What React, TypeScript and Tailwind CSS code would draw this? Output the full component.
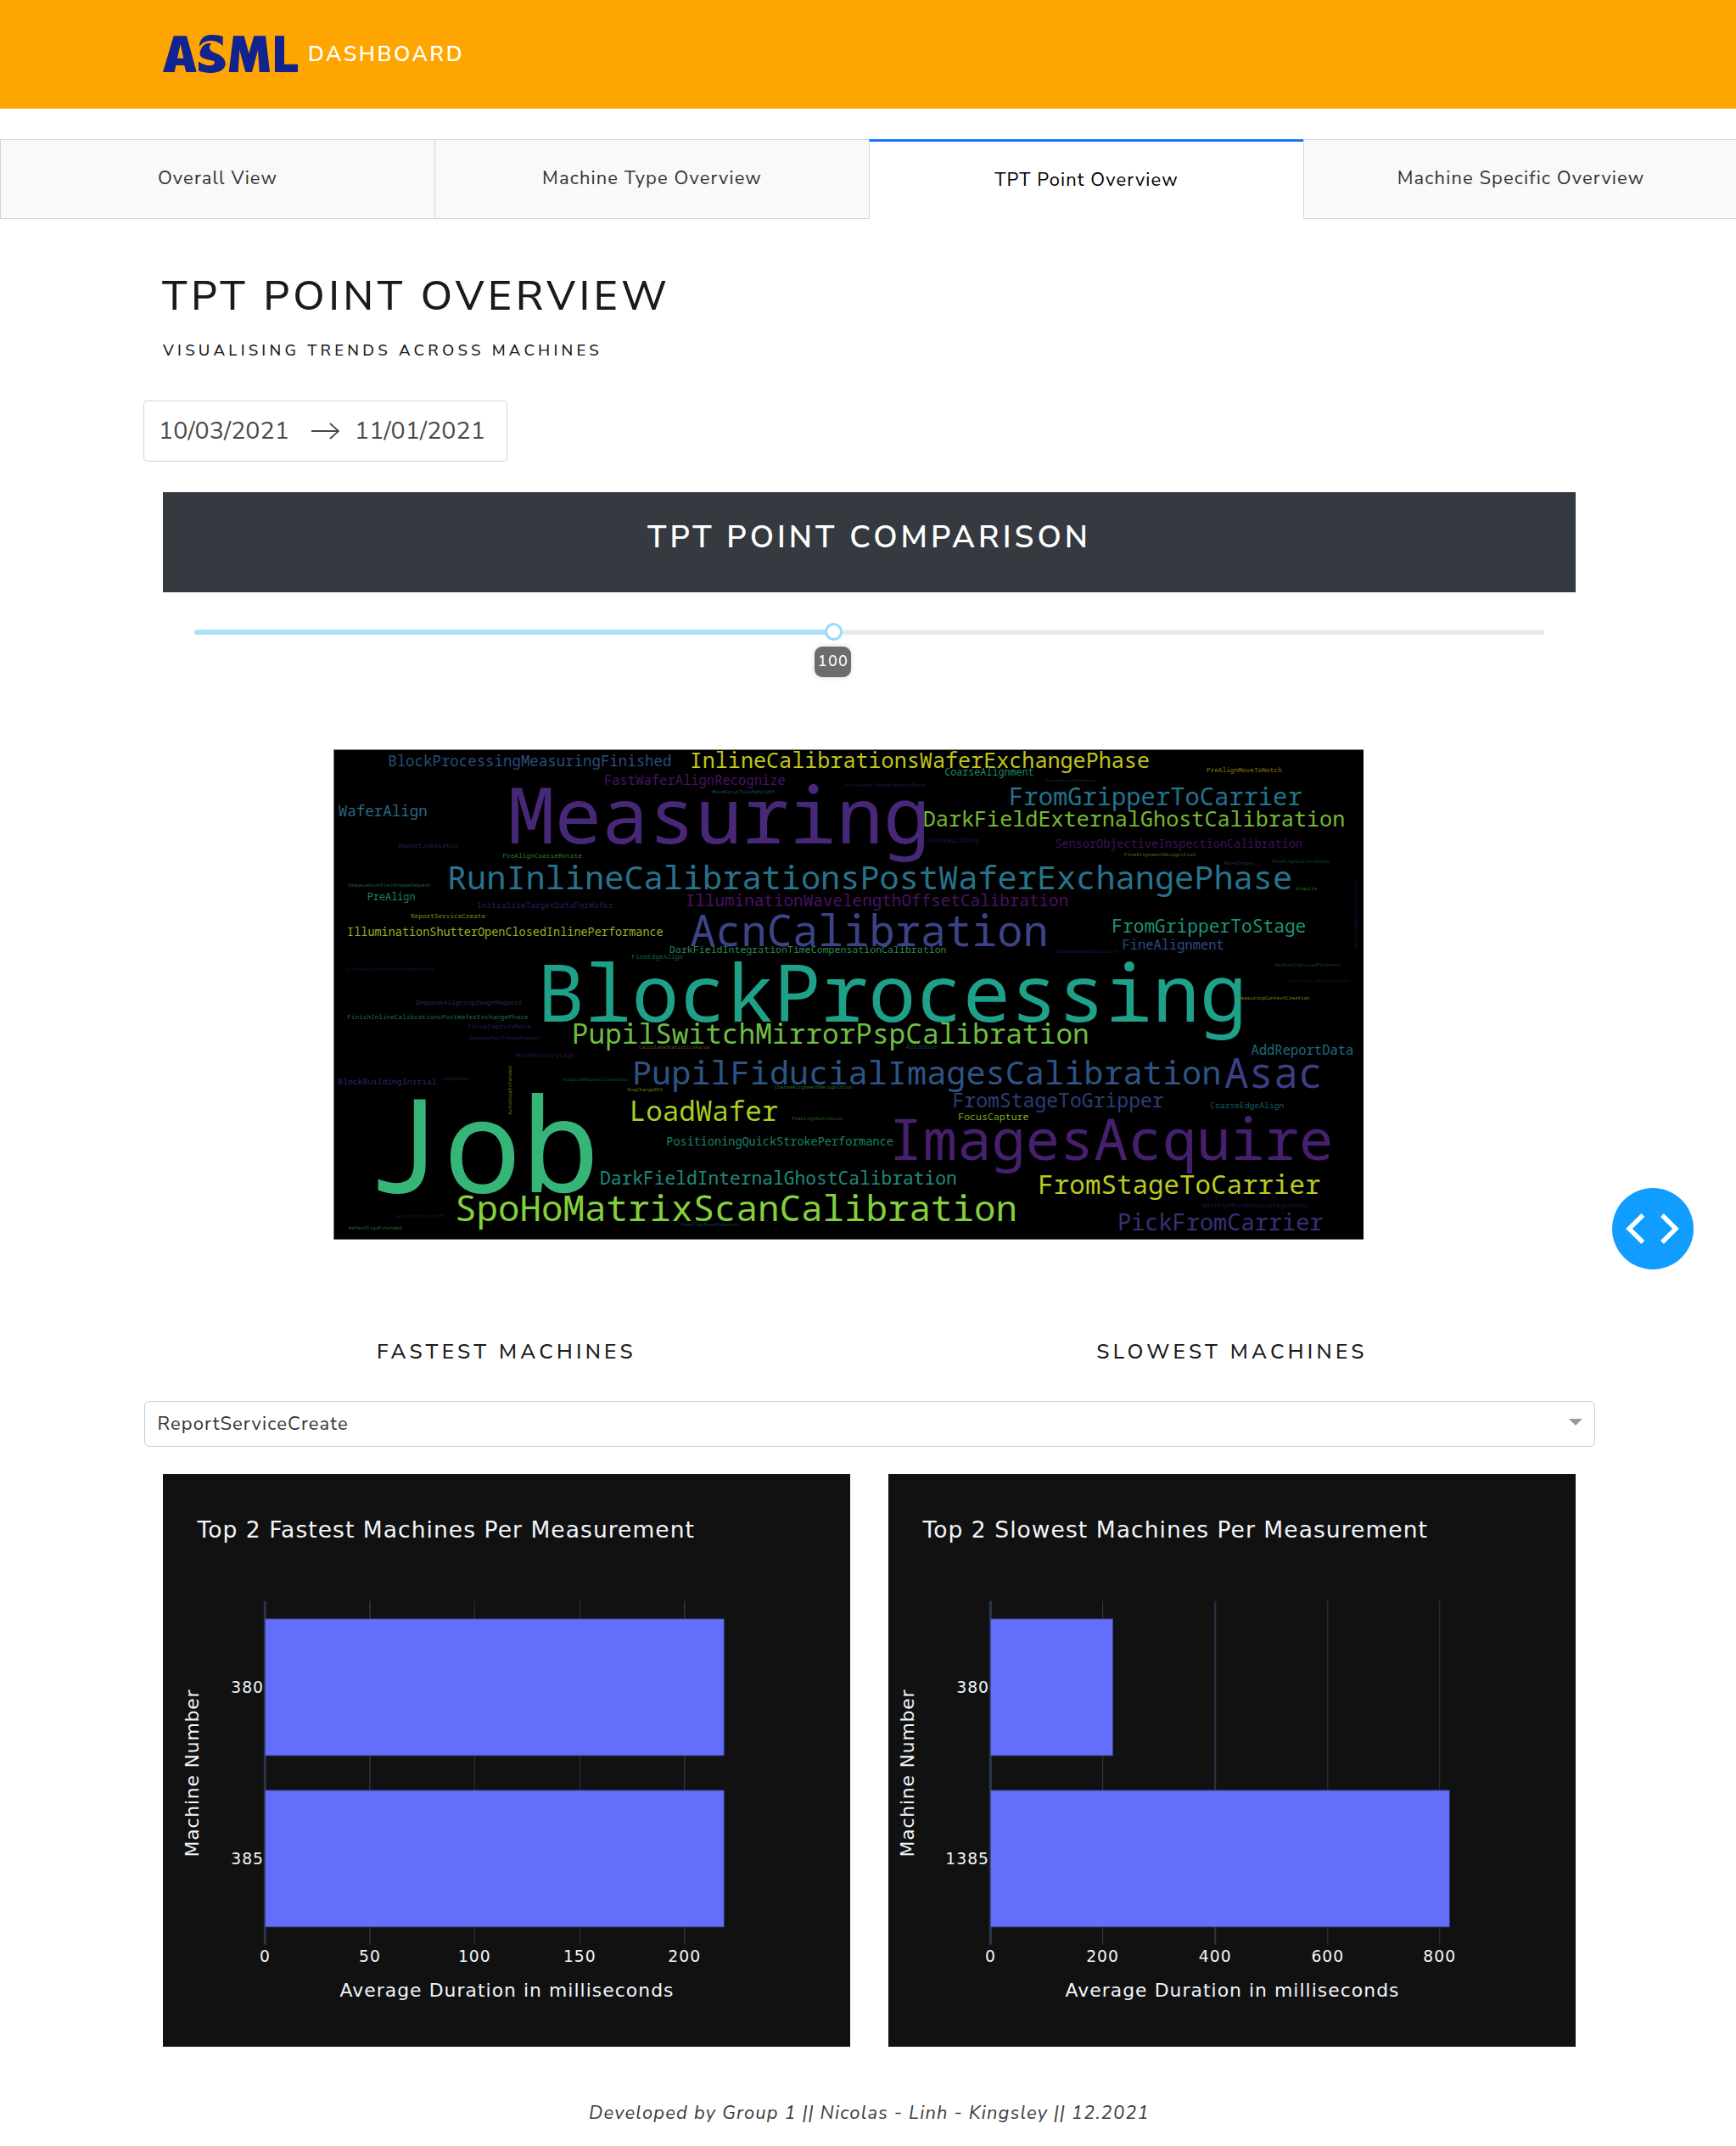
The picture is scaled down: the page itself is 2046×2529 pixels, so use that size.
type Word = [text: string, left: number, right: number, baseline: number, color: string];

const words: Word[] = [
  ["BlockProcessingMeasuringFinished", 458.4, 790.2, 902.5, "#2c4c7d"],
  ["InlineCalibrationsWaferExchangePhase", 814.3, 1352.7, 904.5, "#c2c51b"],
  ["FastWaferAlignRecognize", 713, 924.6, 924.5, "#4a1263"],
  ["MoveFocusToSafeHeigth", 840, 913, 935, "#14524e"],
  ["InitialiseTargetDataForPhase", 994, 1091, 926.5, "#26184a"],
  ["CoarseAlignment", 1114, 1217.5, 914, "#1d8c5c"],
  ["DequeueSpectraWaferRequest", 1233, 1293, 920.5, "#1f2f55"],
  ["PreAlignMoveToNotch", 1422.3, 1510, 909.5, "#877d16"],
  ["Measuring", 604.5, 1087.5, 993.5, "#472878"],
  ["FromGripperToCarrier", 1191, 1532, 949, "#24748f"],
  ["DarkFieldExternalGhostCalibration", 1089.4, 1583, 974, "#76b834"],
  ["WaferAlign", 400, 502, 962, "#266a87"],
  ["BlockBuilding", 1093, 1153.4, 993, "#2a1146"],
  ["SensorObjectiveInspectionCalibration", 1244.4, 1534, 998.7, "#42125c"],
  ["ReportJobStatus", 470, 539, 998.7, "#222452"],
  ["PreAlignCoarseRotate", 592.8, 685.4, 1011.3, "#307a33"],
  ["FineAlignmentRecognition", 1325.4, 1408.5, 1009, "#4a6e1c"],
  ["MoveStages", 1443, 1478, 1018.7, "#1e3050"],
  ["PreAlignCollectData", 1500, 1566, 1017.3, "#12443f"],
  ["RunInlineCalibrationsPostWaferExchangePhase", 529.5, 1519.5, 1047.7, "#27738c"],
  ["DequeueDarkFieldImageRequest", 410.6, 507.4, 1044.7, "#1e6233"],
  ["Acquire", 1528, 1552, 1049.3, "#2c6a24"],
  ["PreAlign", 433.5, 488.5, 1061, "#1b826f"],
  ["InitializeTargetDataForWafer", 562.8, 722, 1070, "#2c1e61"],
  ["IlluminationWavelengthOffsetCalibration", 809, 1257.8, 1067.7, "#491263"],
  ["ReportServiceCreate", 484.5, 571.5, 1082, "#888a16"],
  ["IlluminationShutterOpenClosedInlinePerformance", 410, 780.7, 1103.3, "#93b224"],
  ["AcnCalibration", 816.5, 1231, 1115, "#3d4388"],
  ["DarkFieldIntegrationTimeCompensationCalibration", 789.8, 1114.7, 1123.3, "#298c54"],
  ["FineEdgeAlign", 745, 804.4, 1130.3, "#136058"],
  ["InlineCalibrationsDataHandling", 407.8, 510.6, 1144, "#251044"],
  ["FromGripperToStage", 1311.6, 1537.4, 1098.7, "#1d927b"],
  ["FineAlignment", 1323.4, 1441.3, 1118.7, "#2d4d80"],
  ["QueueCommandsToSource", 1244, 1316, 1123, "#2b0e42"],
  ["WaferAlignLoadPatterns", 1503.4, 1579.7, 1139.3, "#143f50"],
  ["ReportProcessedReportAvailable", 1518, 1591.5, 1156.7, "#1e1a48"],
  ["BlockProcessing", 639, 1461, 1204, "#1fa088"],
  ["MeasuringContextCreation", 1459.5, 1543, 1177.7, "#788516"],
  ["DequeueAligningImageRequest", 490.8, 615, 1184, "#1f2c59"],
  ["FinishInlineCalibrationsPostWaferExchangePhase", 409.8, 622, 1200.7, "#166f53"],
  ["FocusCaptureMove", 552, 624.9, 1212.3, "#251c58"],
  ["DequeuePupilImageRequest", 553.7, 636.3, 1224.7, "#182448"],
  ["PupilSwitchMirrorPspCalibration", 675.9, 1281, 1230.3, "#6ebd42"],
  ["CalculateStatisticsFocus", 753.4, 836.4, 1236.3, "#5a6210"],
  ["AutoDose", 1068, 1104, 1236.3, "#0f4040"],
  ["MoveRotaryStage", 607.9, 676.3, 1246, "#301048"],
  ["BlockBuildingInitial", 399, 513.8, 1277.7, "#2c2a6d"],
  ["IntegrateTest", 520.9, 554.5, 1273.3, "#142844"],
  ["AcquireRequestCreation", 663.6, 739.5, 1274.3, "#104c4c"],
  ["PupilFiducialImagesCalibration", 747.5, 1436, 1278, "#2d5487"],
  ["Asac", 1446, 1554.4, 1282.3, "#3b3e85"],
  ["AddReportData", 1475.5, 1594, 1243.3, "#1f6b7a"],
  ["EnqChangeROI", 740, 780.7, 1286, "#787411"],
  ["CoarseAlignmentRecognition", 913, 1003.7, 1283.3, "#336c22"],
  ["FromStageToGripper", 1124, 1369.7, 1305.3, "#2e3c78"],
  ["CoarseEdgeAlign", 1427, 1512.5, 1305.7, "#155e66"],
  ["FocusCapture", 1130, 1211.5, 1319.7, "#80a826"],
  ["LoadWafer", 743.9, 914.3, 1321.3, "#a8ce23"],
  ["PreAlignNotchScan", 933.3, 992.6, 1320.3, "#2c5c20"],
  ["Job", 440.5, 692, 1404.7, "#35b678"],
  ["ImagesAcquire", 1052, 1565, 1366.7, "#46206e"],
  ["PositioningQuickStrokePerformance", 786.2, 1052, 1349.7, "#1b826d"],
  ["DarkFieldInternalGhostCalibration", 708.3, 1126, 1395.7, "#1e8b7b"],
  ["SpoHoMatrixScanCalibration", 538.7, 1195.3, 1438.7, "#84d03c"],
  ["FromStageToCarrier", 1225.4, 1553.6, 1407.3, "#bdc91d"],
  ["WaitForMoveRotaryStageReady", 1416.8, 1540.5, 1422.7, "#251144"],
  ["PickFromCarrier", 1318.7, 1557, 1449.7, "#383178"],
  ["ReportJobAlarmsDEF", 466.7, 524.4, 1434.7, "#280a3e"],
  ["WaferAlignExtended", 411.4, 473.4, 1449, "#276632"],
  ["PreAlignMoveToSensor", 802.8, 871.2, 1445.3, "#0e4248"],
];

// Words set vertically: text, baseline x, bottom y, top y, colour.
const verticalWords: [string, number, number, number, string][] = [
  ["AutoDoseExtended", 603, 1313, 1256.7, "#7a7a14"],
  ["ApplicationWaferAlignCreation", 1600, 1116.7, 1037.7, "#1f1540"],
];

const ADVANCE = 0.6;
const fitWord = (text: string, length: number) => {
  const advance = length / (text.length - 0.27);
  return { size: advance / ADVANCE, bearing: advance * 0.11 };
};

function WordCloud() {
  return (
    <svg
      viewBox="393 883 1214 578"
      className="mt-32 ml-[201px] h-[578px] w-[1214px] overflow-visible bg-black font-['Noto_Sans_Mono','DejaVu_Sans_Mono',monospace] font-[450]"
    >
      {words.map(([text, left, right, baseline, color]) => {
        const { size, bearing } = fitWord(text, right - left);
        return (
          <text key={text} x={left - bearing} y={baseline} fontSize={size} fill={color}>
            {text}
          </text>
        );
      })}
      {verticalWords.map(([text, x, bottom, top, color]) => {
        const { size, bearing } = fitWord(text, bottom - top);
        return (
          <text key={text} transform={`translate(${x} ${bottom + bearing}) rotate(-90)`} fontSize={size} fill={color}>
            {text}
          </text>
        );
      })}
      <rect x="393" y="883" width="1214" height="0.7" fill="#b0b0b0" />
      <rect x="393" y="883" width="0.7" height="578" fill="#909090" />
      <rect x="393" y="1460.3" width="1214" height="0.7" fill="#909090" />
    </svg>
  );
}

function Logo() {
  return (
    <svg viewBox="0 0 160 46" className="-mt-px h-[46px] w-40" fill="#10238f">
      <path
        fillRule="evenodd"
        d="M0 44 12.7 1.3H28L39.7 44H27.3L25.3 36H15.3L13.7 44ZM17 27.7H24.3L20.7 11Z"
      />
      <path d="M43 14C43 4 50 0 57 0 63-.2 68 1 70.7 2V13C64 6 50 4 43 14Z" />
      <path d="M43.5 23C44 13 51 8.500 57.500 10.500 52.500 14 55 19 62 21.500 75 26 77 37 69 42 62 46 50 45.500 42 42.500V31.500C50 37 59 38 61 33 62.500 28.500 45 31 43.500 23Z" />
      <path d="M77.700 44 83 1.300H95.700L101.300 22 107.300 1.300H121L126 44H113.700L112 18 105 44H97.300L90.300 18 88.700 44Z" />
      <path d="M132 1.300H143V34.700H159V44H132Z" />
    </svg>
  );
}

const tabs = ["Overall View", "Machine Type Overview", "TPT Point Overview", "Machine Specific Overview"];

function Tabs() {
  return (
    <nav className="mt-9 flex h-[94px] w-full overflow-hidden text-[21.9px] font-[370] tracking-[1.13px]">
      {tabs.map((label) =>
        label === "TPT Point Overview" ? (
          <div
            key={label}
            className="flex w-[512px] shrink-0 items-center justify-center border-t-[3px] border-l border-t-[#1975fa] border-l-[#d6d6d6] text-black"
          >
            {label}
          </div>
        ) : (
          <div
            key={label}
            className="flex w-[512px] shrink-0 items-center justify-center border-t border-b border-l border-[#d6d6d6] bg-[#f9f9f9] pb-[2px] text-[#333333]"
          >
            {label}
          </div>
        ),
      )}
    </nav>
  );
}

type ChartProps = {
  title: string;
  titleEnd: number;
  ticks: { label: string; x: number; w: number }[];
  bars: { label: string; end: number }[];
  axisTitleX: number;
};

function BarChart({ title, titleEnd, ticks, bars, axisTitleX }: ChartProps) {
  return (
    <svg
      viewBox="0 0 810 675"
      className="h-[675px] w-[810px] bg-[#111111] font-[Verdana,'DejaVu_Sans',sans-serif]"
      fill="#f2f5fa"
    >
      <text x="40.5" y="75" fontSize="26.56" textLength={titleEnd - 40}>
        {title}
      </text>
      {ticks.map((t) => (
        <rect key={t.label} x={t.x - t.w / 2} y="149.7" width={t.w} height="405" fill="#283442" />
      ))}
      {bars.map((b, i) => (
        <g key={b.label}>
          <rect
            x="120.5"
            y={170.9 + i * 202}
            width={b.end - 120.5}
            height="161"
            fill="#636efa"
            stroke="#3b4296"
            strokeWidth="0.8"
          />
          <text x="119" y={258 + i * 202} fontSize="18.75" letterSpacing="1" textAnchor="end">
            {b.label}
          </text>
        </g>
      ))}
      {ticks.map((t) => (
        <text key={t.label} x={t.x} y="574.5" fontSize="18.75" letterSpacing="1" textAnchor="middle">
          {t.label}
        </text>
      ))}
      <text x="208.5" y="615.5" fontSize="21.88" textLength="393">
        Average Duration in milliseconds
      </text>
      <text transform={`translate(${axisTitleX} 451.5) rotate(-90)`} fontSize="21.88" textLength="197">
        Machine Number
      </text>
    </svg>
  );
}

export default function App() {
  return (
    <div className="relative h-[2529px] w-[2046px] overflow-hidden bg-white font-['Nunito_Sans',Nunito,'Open_Sans',sans-serif] text-[#1a1a1a]">
      <header className="flex h-32 items-center bg-[#ffa500] pl-48">
        <Logo />
        <span className="ml-[11px] text-[25px] leading-10 font-semibold tracking-[2.5px] text-white">DASHBOARD</span>
      </header>

      <Tabs />

      <main className="ml-48 w-[1665px]">
        <h1 className="mt-[61px] -ml-px text-[48.5px] leading-[60px] font-medium tracking-[4.46px] whitespace-nowrap">
          TPT POINT OVERVIEW
        </h1>
        <h6 className="mt-5 text-[18.5px] leading-7 font-medium tracking-[4.23px] whitespace-nowrap">
          VISUALISING TRENDS ACROSS MACHINES
        </h6>

        <div className="mt-[45px] -ml-[23px] flex h-[72px] w-[429px] items-center rounded-[4px] border border-[#d5d5d5] pl-[17px] text-[28.5px] font-[370] tracking-[0.1px] text-[#484848]">
          <span className="w-[152px] whitespace-nowrap">10/03/2021</span>
          <svg viewBox="0 0 33 20" className="ml-[28px] h-5 w-[33px]" fill="none" stroke="#484848" strokeWidth="1.8">
            <path d="M0 10H32M22 1 32 10 22 19" />
          </svg>
          <span className="ml-[18px] whitespace-nowrap">11/01/2021</span>
        </div>

        <div className="mt-9 h-[118px] bg-[#343a40] text-center text-[36.5px] leading-[106px] font-semibold tracking-[4.1px] text-white">
          TPT POINT COMPARISON
        </div>

        <div className="relative mx-[37px] mt-9 flex h-[21px] items-center">
          <div className="h-1.5 w-[753px] rounded-l-full bg-[#abe2fb]" />
          <div className="h-1.5 flex-1 rounded-r-full bg-[#e9e9e9]" />
          <div className="absolute top-0 left-[742.5px] size-[21px] rounded-full border-[3px] border-[#96dbfa] bg-white" />
          <div className="absolute top-[28px] left-[731px] h-9 w-[43px] rounded-[9px] bg-[#6c6c6c] pl-px text-center text-[18px] leading-[35px] font-medium tracking-[1.4px] text-white shadow-[0_0_6px_#d9d9d9]">
            100
          </div>
        </div>

        <WordCloud />

        <div className="mt-[112px] grid grid-cols-2 gap-x-[45px] text-center text-[24.5px] leading-10 font-medium tracking-[4.28px]">
          <h5>FASTEST MACHINES</h5>
          <h5>SLOWEST MACHINES</h5>
        </div>

        <div className="-mx-[22.5px] mt-[38px] flex h-[54px] items-center justify-between rounded-[6px] border border-[#cccccc] pr-[14px] pl-[15px] text-[21.9px] font-[370] tracking-[1.15px] text-[#333333]">
          <span>ReportServiceCreate</span>
          <svg viewBox="0 0 16 8" className="-mt-1 h-2 w-4" fill="#999999">
            <path d="M0 0H16L8 8Z" />
          </svg>
        </div>

        <div className="mt-8 flex justify-between">
          <BarChart
            title="Top 2 Fastest Machines Per Measurement"
            titleEnd={625.5}
            axisTitleX={42.4}
            ticks={[
              { label: "0", x: 120.4, w: 3.2 },
              { label: "50", x: 243.9, w: 1.6 },
              { label: "100", x: 367.3, w: 1 },
              { label: "150", x: 491.3, w: 1 },
              { label: "200", x: 614.7, w: 1.6 },
            ]}
            bars={[
              { label: "380", end: 661.2 },
              { label: "385", end: 661.2 },
            ]}
          />
          <BarChart
            title="Top 2 Slowest Machines Per Measurement"
            titleEnd={634.5}
            axisTitleX={30.4}
            ticks={[
              { label: "0", x: 120.4, w: 3.2 },
              { label: "200", x: 252.6, w: 1.2 },
              { label: "400", x: 385.2, w: 2 },
              { label: "600", x: 517.8, w: 1.2 },
              { label: "800", x: 649.7, w: 1 },
            ]}
            bars={[
              { label: "380", end: 264.6 },
              { label: "1385", end: 661.3 },
            ]}
          />
        </div>
      </main>

      <footer className="mt-[57.5px] ml-48 w-[1665px] text-center text-[21.9px] leading-10 font-[370] tracking-[1.2px] text-[#3c3c3c] italic">
        Developed by Group 1 || Nicolas - Linh - Kingsley || 12.2021
      </footer>

      <button
        aria-label="Open dev tools"
        className="absolute top-[1400px] left-[1900px] flex size-24 items-center justify-center rounded-full bg-[#119dff]"
      >
        <svg viewBox="0 0 96 96" className="size-24" fill="none" stroke="#ffffff" strokeWidth="5.4">
          <path d="M36.3 32 20 48 36.3 64M59 32 75 48 59 64" />
        </svg>
      </button>
    </div>
  );
}
